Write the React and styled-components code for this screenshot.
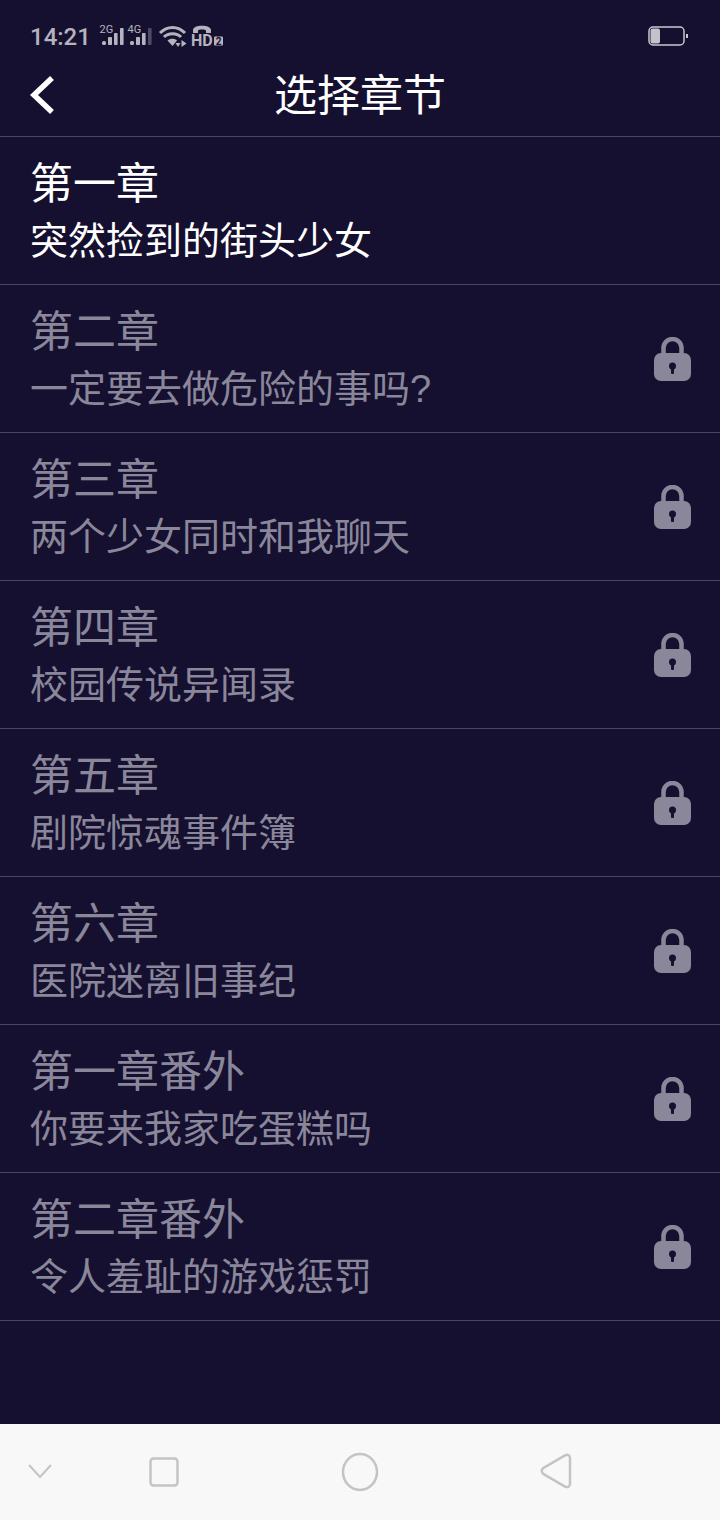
import React from "react";
import styled, { createGlobalStyle } from "styled-components";

const BG = "#161030";
const STATUS = "#b5b3bd";
const DIM = "#8a879b";

const Global = createGlobalStyle`
  html, body { margin: 0; padding: 0; background: ${BG}; }
  body { font-family: "Noto Sans CJK SC", "Noto Sans", sans-serif; }
`;

const Screen = styled.div`
  width: 720px;
  height: 1520px;
  display: flex;
  flex-direction: column;
  background: ${BG};
  overflow: hidden;
`;

const StatusBar = styled.div`
  height: 72px;
  flex: none;
  box-sizing: border-box;
  padding: 0 32px 0 30px;
  display: flex;
  align-items: center;
  color: ${STATUS};
`;

const Time = styled.span`
  font-family: Roboto, sans-serif;
  font-size: 24px;
  font-weight: 500;
  line-height: 30px;
  margin-right: 9px;
  position: relative;
  top: 1px;
`;

const StatusIcons = styled.div`
  display: flex;
  align-items: center;
  gap: 4px;
  flex: 1;

  svg {
    overflow: visible;
  }
`;

const TinyLabel = styled.text`
  font-family: Roboto, sans-serif;
  font-size: 11px;
  fill: ${STATUS};
`;

const HdLabel = styled.text`
  font-family: Roboto, sans-serif;
  font-size: 16px;
  font-weight: 700;
  fill: ${STATUS};
`;

const BadgeDigit = styled.text`
  font-family: Roboto, sans-serif;
  font-size: 10px;
  font-weight: 700;
  fill: ${BG};
`;

const WifiIcon = styled.svg`
  margin-left: 3px;
`;

const Header = styled.header`
  height: 65px;
  flex: none;
  box-sizing: border-box;
  padding-bottom: 24px;
  position: relative;
  display: flex;
  align-items: center;
  justify-content: center;
  border-bottom: 1px solid #4a4660;
`;

const BackButton = styled.button`
  position: absolute;
  left: 28px;
  top: 3px;
  padding: 0;
  border: 0;
  background: none;
  display: flex;
`;

const Title = styled.h1`
  margin: 0;
  color: #ffffff;
  font-size: 43px;
  font-weight: 400;
  line-height: 48px;
`;

const List = styled.ul`
  list-style: none;
  margin: 0;
  padding: 0;
  flex: 1;
`;

const Row = styled.li`
  height: 147px;
  border-bottom: 1px solid #4a4660;
  display: flex;
  align-items: center;
  justify-content: space-between;
  padding: 0 29px 0 30px;
`;

const Texts = styled.div`
  display: flex;
  flex-direction: column;
  margin-bottom: 6px;
  color: ${(p) => (p.$locked ? DIM : "#ffffff")};
`;

const ChapterName = styled.div`
  font-size: 43px;
  line-height: 60px;
  height: 60px;
`;

const ChapterDesc = styled.div`
  font-family: "Liberation Sans", "Noto Sans CJK SC", sans-serif;
  font-size: 38px;
  line-height: 56px;
  height: 53px;
  padding-top: 3px;
  white-space: nowrap;
`;

const NavBar = styled.nav`
  height: 96px;
  flex: none;
  background: #f8f8f8;
  position: relative;
`;

const NavIcon = styled.svg`
  position: absolute;
  left: ${(p) => p.$x}px;
  top: ${(p) => p.$y}px;
`;

const chapters = [
  ["第一章", "突然捡到的街头少女", false],
  ["第二章", "一定要去做危险的事吗?", true],
  ["第三章", "两个少女同时和我聊天", true],
  ["第四章", "校园传说异闻录", true],
  ["第五章", "剧院惊魂事件簿", true],
  ["第六章", "医院迷离旧事纪", true],
  ["第一章番外", "你要来我家吃蛋糕吗", true],
  ["第二章番外", "令人羞耻的游戏惩罚", true],
];

const Signal = ({ label, dim }) => (
  <svg width="24" height="22" viewBox="0 0 24 22">
    <TinyLabel x="-0.5" y="8">{label}</TinyLabel>
    <rect x="2" y="16" width="4" height="4" rx="1.5" fill={STATUS} />
    <rect x="8" y="12" width="4" height="8" rx="0.8" fill={STATUS} />
    <rect x="14" y="8" width="3.6" height="12" rx="0.8" fill={STATUS} />
    <rect x="20" y="3" width="3.6" height="17" rx="0.8" fill={dim ? "#4f4b63" : STATUS} />
  </svg>
);

const Wifi = () => (
  <WifiIcon width="28" height="22" viewBox="0 0 28 22" fill="none" stroke={STATUS} strokeWidth="3">
    <path d="M1 8C8 0.5 19 0.5 26 8" />
    <path d="M5 12C9 7.5 18 7.5 22 12" />
    <path d="M8.5 15.5C11 13.3 16 13.3 18 15.5L13.5 21Z" fill={STATUS} stroke="none" />
    <path d="M16.5 18h5l-2.5 4z" fill={STATUS} stroke="none" />
    <path d="M22.5 15l0 7l5-3.5z" fill={STATUS} stroke="none" />
  </WifiIcon>
);

const HdCall = () => (
  <svg width="32" height="22" viewBox="0 0 32 22">
    <path d="M2 8V5C2 -0.7 20 -0.7 20 5V8H15V5.5C15 4 7 4 7 5.5V8Z" fill={STATUS} />
    <HdLabel x="0" y="20.5">HD</HdLabel>
    <rect x="23" y="11.5" width="9" height="9" rx="1" fill={STATUS} />
    <BadgeDigit x="24.7" y="19.7">2</BadgeDigit>
  </svg>
);

const Battery = () => (
  <svg width="40" height="20" viewBox="0 0 40 20">
    <rect x="1" y="1" width="35" height="18" rx="4" fill="none" stroke="#c9c7d0" strokeWidth="1.5" />
    <rect x="2.5" y="2.5" width="9.5" height="15" rx="2" fill="#c4c2cb" />
    <rect x="38" y="8" width="2" height="4" fill="#c9c7d0" />
  </svg>
);

const Lock = () => (
  <svg width="37" height="44" viewBox="0 0 37 44">
    <path d="M9.5 18V11a9 9 0 0 1 18 0v7" fill="none" stroke={DIM} strokeWidth="4.5" />
    <rect x="0" y="16" width="37" height="28" rx="7" fill={DIM} />
    <circle cx="18.5" cy="29" r="3.5" fill={BG} />
    <rect x="17" y="30" width="3" height="7" rx="1" fill={BG} />
  </svg>
);

export default function App() {
  return (
    <Screen>
      <Global />
      <StatusBar>
        <Time>14:21</Time>
        <StatusIcons>
          <Signal label="2G" />
          <Signal label="4G" dim />
          <Wifi />
          <HdCall />
        </StatusIcons>
        <Battery />
      </StatusBar>
      <Header>
        <BackButton aria-label="back">
          <svg width="28" height="40" viewBox="0 0 28 40" fill="none" stroke="#fff" strokeWidth="5.5">
            <path d="M24 3L6 20L24 37" />
          </svg>
        </BackButton>
        <Title>选择章节</Title>
      </Header>
      <List>
        {chapters.map(([name, desc, locked]) => (
          <Row key={name}>
            <Texts $locked={locked}>
              <ChapterName>{name}</ChapterName>
              <ChapterDesc>{desc}</ChapterDesc>
            </Texts>
            {locked && <Lock />}
          </Row>
        ))}
      </List>
      <NavBar>
        <NavIcon $x={27} $y={38} width="26" height="18" viewBox="0 0 26 18" fill="none" stroke="#c4c4c4" strokeWidth="2">
          <path d="M2 3L13 15L24 3" />
        </NavIcon>
        <NavIcon $x={149} $y={33} width="30" height="30" viewBox="0 0 30 30" fill="none" stroke="#c4c4c4" strokeWidth="2.5">
          <rect x="1.5" y="1.5" width="27" height="27" rx="3" />
        </NavIcon>
        <NavIcon $x={341} $y={28} width="38" height="40" viewBox="0 0 38 40" fill="none" stroke="#c4c4c4" strokeWidth="2.5">
          <ellipse cx="19" cy="20" rx="17" ry="18" />
        </NavIcon>
        <NavIcon $x={540} $y={29} width="32" height="36" viewBox="0 0 32 36" fill="none" stroke="#c4c4c4" strokeWidth="2.5" strokeLinejoin="round">
          <path d="M3.6 14.8L25.5 2.2Q29.5 0.8 30 5V31Q29.5 35 25.5 33.8L3.6 21.2Q-0.2 18 3.6 14.8Z" />
        </NavIcon>
      </NavBar>
    </Screen>
  );
}
